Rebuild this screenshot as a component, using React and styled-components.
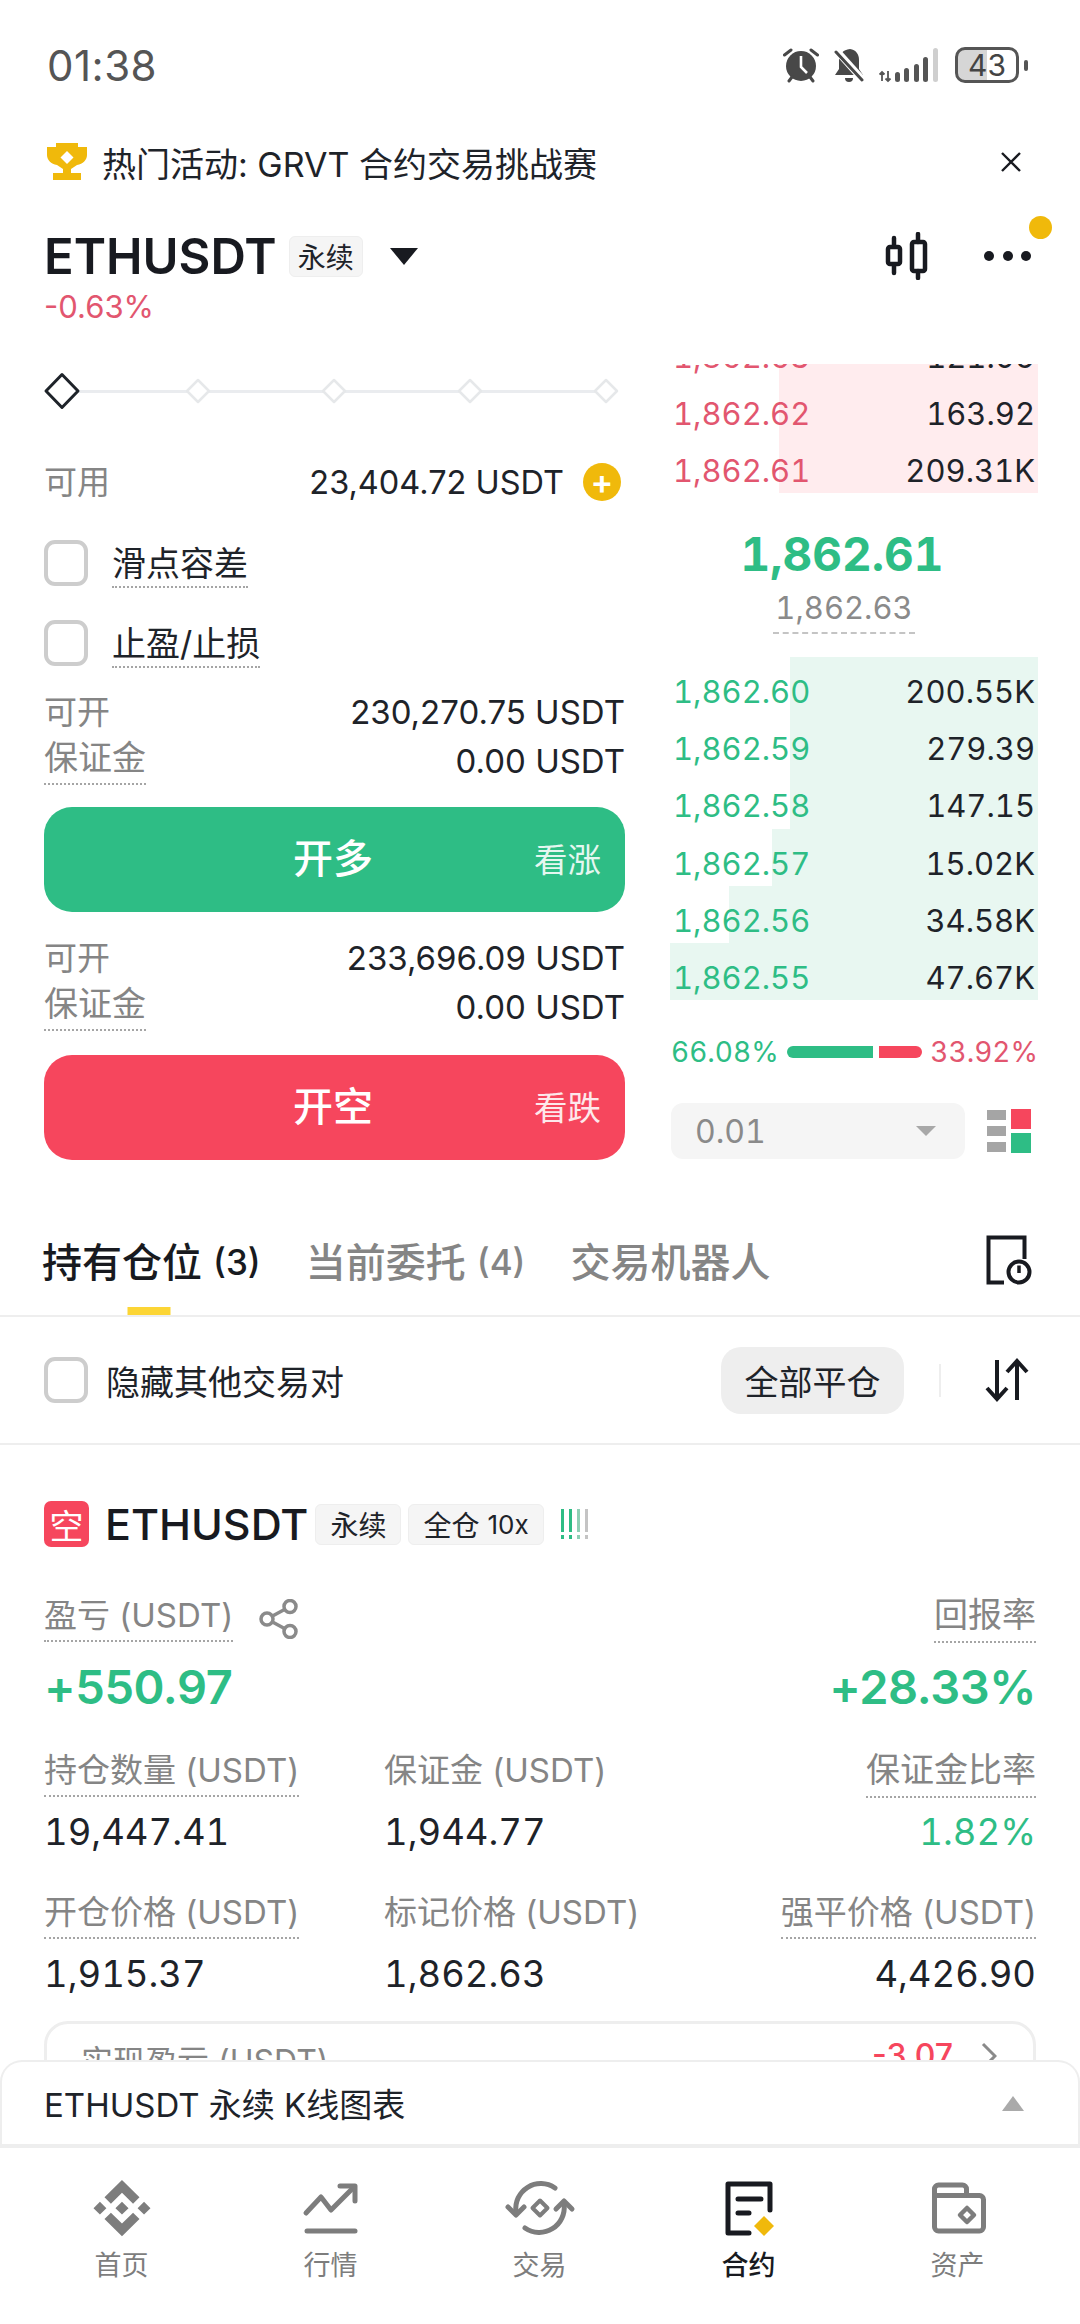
import React from 'react';
import styled, { createGlobalStyle } from 'styled-components';

const Global = createGlobalStyle`
  html, body { margin: 0; padding: 0; background: #fff; }
  * { box-sizing: border-box; }
  body { font-family: Inter, "Noto Sans CJK SC", sans-serif; color: #1e2329; }
`;

const GREEN = '#2ebd85';
const RED = '#f6465d';
const SOFTRED = '#e2566f';
const GRAY = '#858585';

const Page = styled.div`
  width: 1080px; height: 2324px; display: flex; flex-direction: column; overflow: hidden; background: #fff;
`;
const Main = styled.div`
  flex: 1; min-height: 0; overflow: hidden; display: flex; flex-direction: column;
`;
const StatusBar = styled.div`
  flex: none; height: 130px; padding: 0 52px 0 47px; display: flex; align-items: center; justify-content: space-between;
`;
const Clock = styled.span`
  font-size: 42px; color: #555; letter-spacing: 0.5px;
`;
const StatusIcons = styled.div`
  display: flex; align-items: center; gap: 15px;
`;
const Battery = styled.div`
  width: 64px; height: 36px; border: 3px solid #555; border-radius: 10px; display: flex; align-items: center; justify-content: center;
  font-size: 30px; font-weight: 400; color: #444; overflow: hidden; background: linear-gradient(90deg, #d6d6d6 0 50%, #fff 50%);
`;
const BatteryNub = styled.div`
  width: 4px; height: 11px; background: #555; border-radius: 2px; margin-left: -10px;
`;
const Banner = styled.div`
  flex: none; height: 64px; padding: 0 58px 0 47px; display: flex; align-items: center; gap: 15px; font-size: 34px; color: #1e2329;
`;
const BannerText = styled.span`
  flex: 1;
`;
const TitleRow = styled.div`
  flex: none; margin-top: 34px; height: 56px; padding: 0 49px 0 44px; display: flex; align-items: center; position: relative;
`;
const Symbol = styled.span`
  font-size: 49px; font-weight: 600; color: #181a20;
`;
const Tag = styled.span`
  display: inline-flex; align-items: center; justify-content: center; height: 41px; padding: 0 ${p => p.$pad}px;
  margin-left: ${p => p.$ml || 0}px; background: #f5f5f5; border-radius: 6px; border: 1px solid #eee; font-size: 28px; color: #1e2329; gap: 8px;
`;
const TagSmall = styled.span`
  font-size: 26px;
`;
const Caret = styled.span`
  margin-left: 27px; width: 0; height: 0; border-left: 14px solid transparent; border-right: 14px solid transparent; border-top: 17px solid #181a20;
`;
const Spacer = styled.div`
  flex: 1;
`;
const Dots = styled.div`
  margin-left: 54px; display: flex; gap: 8.5px; align-items: center;
`;
const Dot = styled.span`
  width: 10px; height: 10px; border-radius: 50%; background: #181a20;
`;
const Badge = styled.span`
  position: absolute; right: 28px; top: -12px; width: 23px; height: 23px; border-radius: 50%; background: #f0b90b;
`;
const Change = styled.div`
  flex: none; height: 44px; padding-left: 44px; display: flex; align-items: center; font-size: 31px; color: ${SOFTRED};
`;
const Trade = styled.div`
  flex: none; margin-top: 36px; padding: 0 42px 0 44px; display: grid; grid-template-columns: 581px 372px; column-gap: 41px; height: 795px;
`;
const Left = styled.div`
  display: flex; flex-direction: column;
`;
const SliderRow = styled.div`
  height: 54px; position: relative; display: flex; align-items: center; justify-content: space-between; padding: 0 6px 0 5px;
`;
const SliderTrack = styled.div`
  position: absolute; left: 20px; right: 18px; top: 26px; height: 3px; background: #eaecef;
`;
const BigDiamond = styled.svg`
  position: relative; margin: 0 -6px;
`;
const SmallDiamond = styled.svg`
  position: relative;
`;
const AvailRow = styled.div`
  margin-top: 32px; height: 64px; display: flex; align-items: center; justify-content: space-between; font-size: 32.5px; padding-right: 4px;
`;
const Muted = styled.span`
  color: ${GRAY}; font-size: ${p => p.$fs || 33}px; margin-bottom: ${p => p.$mb ?? 4}px;
`;
const AvailValue = styled.span`
  display: flex; align-items: center; gap: 19px; color: #1e2329;
`;
const Plus = styled.span`
  width: 38px; height: 38px; border-radius: 50%; background: #f0b90b; position: relative; display: flex; align-items: center; justify-content: center;
  color: #fff; font-size: 34px; font-weight: 600; line-height: 1;
`;
const CheckRow = styled.div`
  margin-top: ${p => p.$mt}px; height: 46px; display: flex; align-items: center; gap: 24px; font-size: 34px;
`;
const Check = styled.span`
  flex: none; width: 44px; height: 46px; border: 4px solid #cdcdcd; border-radius: 11px; background: #fff;
`;
const Dotted = styled.span`
  display: inline-block; line-height: 1.2; border-bottom: 2px dotted ${p => p.$plain ? 'transparent' : '#a5a5a5'}; padding-bottom: ${p => p.$pb ?? 2}px;
  color: ${p => p.$c || 'inherit'}; font-size: ${p => p.$fs ? `${p.$fs}px` : 'inherit'};
`;
const CheckLabel = styled(Dotted)`
  margin-top: 6px; color: #1e2329;
`;
const InfoRow = styled.div`
  margin-top: ${p => p.$mt || 0}px; height: ${p => p.$h || 48}px; display: flex; align-items: center; justify-content: space-between; font-size: 33px; color: #1e2329;
`;
const TradeButton = styled.div`
  margin-top: ${p => p.$mt}px; height: 105px; background: ${p => p.$bg}; border-radius: 28px; color: #fff; position: relative;
  display: flex; align-items: center; justify-content: center; font-size: 40px; font-weight: 500; padding: 0 3px 8px 0;
`;
const ButtonHint = styled.span`
  position: absolute; right: 24px; top: 48%; transform: translateY(-50%); font-size: 33.5px; font-weight: 400; opacity: .88;
`;
const Right = styled.div`
  display: flex; flex-direction: column; font-variant-numeric: tabular-nums;
`;
const Asks = styled.div`
  height: 129px; overflow: hidden; display: flex; flex-direction: column; justify-content: flex-end;
`;
const BookRow = styled.div`
  flex: none; height: 57.2px; position: relative; display: flex; align-items: center; justify-content: space-between; padding: 12px 3px 0 7px; font-size: 31px;
`;
const BookBar = styled.div`
  position: absolute; right: 0; top: 0; bottom: 0; background: ${p => p.$bg};
`;
const BookPrice = styled.span`
  position: relative; color: ${p => p.$c};
`;
const BookQty = styled.span`
  position: relative; color: #1e2329;
`;
const MidPrice = styled.div`
  margin-top: 35px; height: 52px; display: flex; align-items: center; justify-content: center; color: ${GREEN}; font-weight: 700; font-size: 46px; padding-right: 20px;
`;
const SubPriceWrap = styled.div`
  height: 74px; margin-top: 3px; display: flex; align-items: flex-start; justify-content: center; padding-right: 16px;
`;
const SubPrice = styled.span`
  font-size: 31px; color: #8a8a8a; border-bottom: 2px dashed #c4c4c4; padding: 7px 2px 6px; line-height: 36px; height: 51px;
`;
const Bids = styled.div`
  display: flex; flex-direction: column;
`;
const Ratio = styled.div`
  margin-top: 34px; height: 36px; display: flex; align-items: center; font-size: 28px; padding-left: 5px;
`;
const RatioBar = styled.div`
  display: flex; gap: 6px; margin: 0 8px; flex: 1;
`;
const RatioPart = styled.div`
  height: 12px; background: ${p => p.$bg}; flex: ${p => p.$f}; border-radius: ${p => p.$r};
`;
const SelectRow = styled.div`
  margin-top: 33px; display: flex; align-items: center; padding-left: 5px;
`;
const Select = styled.div`
  width: 294px; height: 56px; background: #f5f5f5; border-radius: 12px; display: flex; align-items: center; justify-content: space-between;
  padding: 0 29px 0 24px; font-size: 32px; color: #8a8a8a;
`;
const SelectCaret = styled.span`
  width: 0; height: 0; border-left: 10px solid transparent; border-right: 10px solid transparent; border-top: 10px solid #a8a8a8;
`;
const DepthIcon = styled.svg`
  margin-left: 22px;
`;
const Tabs = styled.div`
  flex: none; margin-top: 46px; height: 112px; padding: 0 48px 0 42px; display: flex; align-items: stretch; gap: 45px; border-bottom: 2px solid #eeeeee;
  font-size: 40px; font-weight: 500;
`;
const Tab = styled.div`
  position: relative; display: flex; align-items: center; color: ${p => p.$active ? '#181a20' : GRAY};
  &::after {
    content: ''; display: ${p => p.$active ? 'block' : 'none'}; position: absolute; left: 49%; bottom: 0; transform: translateX(-50%); width: 43px; height: 8px; background: #fcd535;
  }
`;
const TabCount = styled.span`
  margin-left: 11px; font-size: 35px; line-height: 1; margin-top: 4px;
`;
const TabIcon = styled.div`
  margin-left: auto; display: flex; align-items: center;
`;
const Tools = styled.div`
  flex: none; height: 128px; padding: 0 50px 0 44px; display: flex; align-items: center; border-bottom: 2px solid #eeeeee; font-size: 34px; gap: 18px;
`;
const CloseAll = styled.div`
  width: 183px; height: 67px; background: #eeeeee; border-radius: 20px; display: flex; align-items: center; justify-content: center; font-size: 34px; color: #1e2329;
`;
const Vline = styled.span`
  width: 2px; height: 33px; background: #eeeeee; margin: 0 25px 0 17px;
`;
const Position = styled.div`
  flex: none; padding: 56px 44px 0 44px; display: flex; flex-direction: column;
`;
const PosHead = styled.div`
  height: 46px; display: flex; align-items: center;
`;
const SideBadge = styled.span`
  width: 45px; height: 46px; border-radius: 7px; background: ${RED}; color: #fff; font-size: 34px; display: flex; align-items: center; justify-content: center; margin-right: 16px;
`;
const PosSymbol = styled.span`
  font-size: 43px; font-weight: 500; color: #181a20; margin-right: 7px;
`;
const Leverage = styled.svg`
  margin-left: 15px;
`;
const PnlLabels = styled.div`
  margin-top: 45px; height: 54px; display: flex; align-items: center; justify-content: space-between; font-size: 33px;
`;
const Inline = styled.div`
  display: flex; align-items: center; gap: 26px;
`;
const PnlValues = styled.div`
  margin-top: 10px; height: 60px; display: flex; align-items: center; justify-content: space-between; font-size: 47px; font-weight: 600; color: ${GREEN}; letter-spacing: -0.4px;
`;
const StatGrid = styled.div`
  margin-top: ${p => p.$mt}px; display: grid; grid-template-columns: 340px 1fr auto; font-size: 33px;
`;
const StatLabel = styled.div`
  height: 50px; display: flex; align-items: center; justify-content: ${p => p.$end ? 'flex-end' : 'flex-start'}; color: ${GRAY};
`;
const StatValue = styled.div`
  margin-top: 8px; height: 50px; display: flex; align-items: center; justify-content: ${p => p.$end ? 'flex-end' : 'flex-start'}; font-size: 36.5px; color: ${p => p.$c || '#1e2329'};
  font-variant-numeric: tabular-nums;
`;
const RealizedCard = styled.div`
  margin-top: 22px; border: 3px solid #eeeeee; border-radius: 24px; height: 120px; padding: 12px 36px 0 34px; display: flex; justify-content: space-between; align-items: flex-start; font-size: 32px;
`;
const RealizedValue = styled.span`
  display: flex; align-items: center; gap: 28px; color: ${RED}; font-weight: 500;
`;
const Sheet = styled.div`
  flex: none; height: 88px; border: 2px solid #eeeeee; border-bottom-width: 4px; border-radius: 22px 22px 0 0; display: flex; align-items: center; justify-content: space-between;
  padding: 0 54px 0 42px; font-size: 33px; color: #1e2329; background: #fff;
`;
const SheetCaret = styled.span`
  width: 0; height: 0; border-left: 11px solid transparent; border-right: 11px solid transparent; border-bottom: 15px solid #aaaaaa;
`;
const Nav = styled.nav`
  flex: none; height: 176px; padding: 30px 17px 0; display: grid; grid-template-columns: repeat(5, 209px);
`;
const NavItem = styled.div`
  display: flex; flex-direction: column; align-items: center; gap: 4px; font-size: 27px; color: ${p => p.$active ? '#181a20' : '#7d7d7d'}; font-weight: ${p => p.$active ? 500 : 400};
`;
const NavIcon = styled.svg`
  width: 72px; height: 62px; display: block;
`;
const Candle = styled.svg`
  display: block;
`;

const asks = ['1,862.63|121.05', '1,862.62|163.92', '1,862.61|209.31K'].map(s => s.split('|'));
const bids = [
  ['1,862.60', '200.55K', 248],
  ['1,862.59', '279.39', 248],
  ['1,862.58', '147.15', 248],
  ['1,862.57', '15.02K', 266],
  ['1,862.56', '34.58K', 309],
  ['1,862.55', '47.67K', 368],
];

const Diamond = () => (
  <SmallDiamond width="26" height="26" viewBox="0 0 26 26">
    <path d="M13 2 24 13 13 24 2 13Z" fill="#fff" stroke="#e6e8ea" strokeWidth="2.5" strokeLinejoin="round" />
  </SmallDiamond>
);

const Trophy = () => (
  <svg width="40" height="38" viewBox="0 0 40 38">
    <path d="M9 0h22v4h9v8c0 5-4 9-10 10l-6 4v4h10v7H6v-7h10v-4l-6-4C4 21 0 17 0 12V4h9Z" fill="#f0b90b" />
    <path d="M20 8l6.500 6.500L20 21l-6.500-6.500Z" fill="#fff" />
  </svg>
);

const barsAt = [[16, 10], [25, 14], [35, 18], [44, 25]];

export default function App() {
  return (
    <Page>
      <Global />
      <Main>
        <StatusBar>
          <Clock>01:38</Clock>
          <StatusIcons>
            <svg width="36" height="36" viewBox="0 0 36 36">
              <circle cx="18" cy="19" r="15" fill="#484848" />
              <path d="M18 9v11l6 6" stroke="#fff" strokeWidth="2.6" fill="none" />
              <path d="M1.500 8 8 3M34.500 8 28 3" stroke="#484848" strokeWidth="3" strokeLinecap="round" />
              <path d="M6 34l3-4M30 34l-3-4" stroke="#484848" strokeWidth="3" strokeLinecap="round" />
            </svg>
            <svg width="30" height="36" viewBox="0 0 30 36">
              <path d="M16 2c6 1 9 5 9 11v9l4 6H1l4-6v-9C5 7 9 3 16 2Z" fill="#484848" />
              <path d="M11 31h8a4 4 0 0 1-8 0Z" fill="#484848" />
              <path d="M2 3l26 29" stroke="#fff" strokeWidth="7" />
              <path d="M2 5l26 28" stroke="#484848" strokeWidth="3" strokeLinecap="round" />
            </svg>
            <svg width="61" height="36" viewBox="0 0 61 36">
              <path d="M3 34V25M0.500 27.500 3 25l2.500 2.500M9 24v10M6.500 31.500 9 34l2.500-2.500" stroke="#555" strokeWidth="1.800" fill="none" />
              {barsAt.map(([x, h]) => (
                <rect key={x} x={x} y={35 - h} width="5" height={h} rx="2.5" fill="#555" />
              ))}
              <rect x="54" y="1" width="5" height="34" rx="2.5" fill="#cfcfcf" />
            </svg>
            <Battery>43</Battery>
            <BatteryNub />
          </StatusIcons>
        </StatusBar>
        <Banner>
          <Trophy />
          <BannerText>热门活动: GRVT 合约交易挑战赛</BannerText>
          <svg width="22" height="22" viewBox="0 0 22 22">
            <path d="M2 2l18 18M20 2 2 20" stroke="#181a20" strokeWidth="2.4" />
          </svg>
        </Banner>
        <TitleRow>
          <Symbol>ETHUSDT</Symbol>
          <Tag $ml={12} $pad={8}>永续</Tag>
          <Caret />
          <Spacer />
          <Candle width="46" height="48" viewBox="0 0 46 48" fill="none" stroke="#181a20" strokeWidth="4.500" strokeLinecap="round" strokeLinejoin="round">
            <path d="M10 6v8M10 33v8M34 2v8M34 39v7" />
            <rect x="4" y="15" width="12" height="17" rx="2" />
            <rect x="28" y="10" width="13" height="29" rx="2" />
          </Candle>
          <Dots><Dot /><Dot /><Dot /></Dots>
          <Badge />
        </TitleRow>
        <Change>-0.63%</Change>
        <Trade>
          <Left>
            <SliderRow>
              <SliderTrack />
              <BigDiamond width="38" height="38" viewBox="0 0 38 38">
                <path d="M19 2.500 35 19 19 35.500 3 19Z" fill="#fff" stroke="#1e2329" strokeWidth="3" strokeLinejoin="round" />
              </BigDiamond>
              <Diamond /><Diamond /><Diamond /><Diamond />
            </SliderRow>
            <AvailRow>
              <Muted>可用</Muted>
              <AvailValue>23,404.72 USDT<Plus>+</Plus></AvailValue>
            </AvailRow>
            <CheckRow $mt={26}><Check /><CheckLabel>滑点容差</CheckLabel></CheckRow>
            <CheckRow $mt={34}><Check /><CheckLabel>止盈/止损</CheckLabel></CheckRow>
            <InfoRow $mt={21} $h={50}><Muted>可开</Muted><span>230,270.75 USDT</span></InfoRow>
            <InfoRow><Muted $fs={34} $mb={0}><Dotted $pb={4}>保证金</Dotted></Muted><span>0.00 USDT</span></InfoRow>
            <TradeButton $mt={22} $bg={GREEN}>开多<ButtonHint>看涨</ButtonHint></TradeButton>
            <InfoRow $mt={21} $h={50}><Muted>可开</Muted><span>233,696.09 USDT</span></InfoRow>
            <InfoRow><Muted $fs={34} $mb={0}><Dotted $pb={4}>保证金</Dotted></Muted><span>0.00 USDT</span></InfoRow>
            <TradeButton $mt={24} $bg={RED}>开空<ButtonHint>看跌</ButtonHint></TradeButton>
          </Left>
          <Right>
            <Asks>
              {asks.map(([p, q]) => (
                <BookRow key={p}>
                  <BookBar $bg="#ffecee" style={{ width: '259px' }} />
                  <BookPrice $c={SOFTRED}>{p}</BookPrice>
                  <BookQty>{q}</BookQty>
                </BookRow>
              ))}
            </Asks>
            <MidPrice>1,862.61</MidPrice>
            <SubPriceWrap><SubPrice>1,862.63</SubPrice></SubPriceWrap>
            <Bids>
              {bids.map(([p, q, w]) => (
                <BookRow key={p}>
                  <BookBar $bg="#e8f7f1" style={{ width: `${w}px` }} />
                  <BookPrice $c={GREEN}>{p}</BookPrice>
                  <BookQty>{q}</BookQty>
                </BookRow>
              ))}
            </Bids>
            <Ratio>
              <BookPrice $c={GREEN}>66.08%</BookPrice>
              <RatioBar>
                <RatioPart $bg={GREEN} $f={91} $r="6px 0 0 6px" />
                <RatioPart $bg={RED} $f={45} $r="0 6px 6px 0" />
              </RatioBar>
              <BookPrice $c={SOFTRED}>33.92%</BookPrice>
            </Ratio>
            <SelectRow>
              <Select>0.01<SelectCaret /></Select>
              <DepthIcon width="44" height="44" viewBox="0 0 44 44">
                <rect x="0" y="1" width="19" height="10" fill="#a5a5a5" />
                <rect x="0" y="17" width="19" height="10" fill="#a5a5a5" />
                <rect x="0" y="33" width="19" height="10" fill="#a5a5a5" />
                <rect x="24" y="0" width="20" height="20" fill={RED} />
                <rect x="24" y="24" width="20" height="20" fill={GREEN} />
              </DepthIcon>
            </SelectRow>
          </Right>
        </Trade>
        <Tabs>
          <Tab $active>持有仓位<TabCount>(3)</TabCount></Tab>
          <Tab>当前委托<TabCount>(4)</TabCount></Tab>
          <Tab>交易机器人</Tab>
          <TabIcon>
            <svg width="46" height="50" viewBox="0 0 46 50">
              <path d="M18 47.500H2.500v-45h36V24" fill="none" stroke="#181a20" strokeWidth="4" />
              <circle cx="33" cy="37" r="10.500" fill="#fff" stroke="#181a20" strokeWidth="4" />
              <path d="M33 30.500V38" stroke="#181a20" strokeWidth="3.500" />
            </svg>
          </TabIcon>
        </Tabs>
        <Tools>
          <Check />
          <span>隐藏其他交易对</span>
          <Spacer />
          <CloseAll>全部平仓</CloseAll>
          <Vline />
          <svg width="46" height="44" viewBox="0 0 46 44">
            <path d="M13 2v38M3 30l10 11 10-11" fill="none" stroke="#181a20" strokeWidth="4" />
            <path d="M33 42V4M23 14 33 3l10 11" fill="none" stroke="#181a20" strokeWidth="4" />
          </svg>
        </Tools>
        <Position>
          <PosHead>
            <SideBadge>空</SideBadge>
            <PosSymbol>ETHUSDT</PosSymbol>
            <Tag $pad={14}>永续</Tag>
            <Tag $ml={7} $pad={14}>全仓 <TagSmall>10x</TagSmall></Tag>
            <Leverage width="32" height="32" viewBox="0 0 32 32">
              {[2, 10, 18, 26].map((x, i) => (
                <g key={x}>
                  <rect x={x} y="1" width="3" height="23" fill={i < 2 ? GREEN : i === 2 ? '#8fcfb5' : '#c4c4c4'} />
                  <rect x={x} y="27" width="3" height="4" fill={i < 2 ? GREEN : i === 2 ? '#8fcfb5' : '#c4c4c4'} />
                </g>
              ))}
            </Leverage>
          </PosHead>
          <PnlLabels>
            <Inline>
              <Dotted $c={GRAY} $pb={5}>盈亏 (USDT)</Dotted>
              <svg width="40" height="40" viewBox="0 0 40 40" fill="none" stroke="#8a8a8a" strokeWidth="3.500">
                <circle cx="8" cy="20" r="6" /><circle cx="31" cy="7.500" r="6" /><circle cx="31" cy="32.500" r="6" />
                <path d="M13.500 17 25.500 10.500M13.500 23 25.500 29.500" />
              </svg>
            </Inline>
            <Dotted $c={GRAY} $pb={5} $fs={34}>回报率</Dotted>
          </PnlLabels>
          <PnlValues><span>+550.97</span><span>+28.33%</span></PnlValues>
          <StatGrid $mt={33}>
            <StatLabel><Dotted $pb={5}>持仓数量 (USDT)</Dotted></StatLabel>
            <StatLabel><Dotted $pb={5} $plain>保证金 (USDT)</Dotted></StatLabel>
            <StatLabel $end><Dotted $pb={5} $fs={34}>保证金比率</Dotted></StatLabel>
            <StatValue>19,447.41</StatValue>
            <StatValue>1,944.77</StatValue>
            <StatValue $end $c={GREEN}>1.82%</StatValue>
          </StatGrid>
          <StatGrid $mt={34}>
            <StatLabel><Dotted $pb={5}>开仓价格 (USDT)</Dotted></StatLabel>
            <StatLabel><Dotted $pb={5} $plain>标记价格 (USDT)</Dotted></StatLabel>
            <StatLabel $end><Dotted $pb={5}>强平价格 (USDT)</Dotted></StatLabel>
            <StatValue>1,915.37</StatValue>
            <StatValue>1,862.63</StatValue>
            <StatValue $end>4,426.90</StatValue>
          </StatGrid>
          <RealizedCard>
            <Muted $fs={32}>实现盈亏 (USDT)</Muted>
            <RealizedValue>-3.07
              <svg width="16" height="28" viewBox="0 0 16 28"><path d="M2 2l12 12L2 26" fill="none" stroke="#8a8a8a" strokeWidth="3" /></svg>
            </RealizedValue>
          </RealizedCard>
        </Position>
      </Main>
      <Sheet>
        <span>ETHUSDT 永续 K线图表</span>
        <SheetCaret />
      </Sheet>
      <Nav>
        <NavItem>
          <NavIcon viewBox="0 0 72 62" fill="#7d7d7d">
            <g transform="translate(7.500 2) scale(.45 .445)">
              <path d="M38.730 53.200 63.300 28.630 87.890 53.220 102.200 38.920 63.300 0 24.420 38.900zM0 63.310l14.300-14.300 14.310 14.300-14.310 14.300zM38.730 73.410 63.300 97.980l24.590-24.580 14.310 14.290-.01.01L63.300 126.600 24.420 87.700l-.02-.02zM98 63.310l14.300-14.300 14.300 14.300-14.300 14.300zM77.830 63.300 63.300 48.760 52.560 59.500l-1.240 1.240-2.540 2.540 14.520 14.500 14.530-14.520z" />
            </g>
          </NavIcon>
          首页
        </NavItem>
        <NavItem>
          <NavIcon viewBox="0 0 72 62" fill="none" stroke="#7d7d7d" strokeWidth="5" strokeLinecap="round" strokeLinejoin="round">
            <path d="M11 35 26 19l10 13 23-23" />
            <path d="M45 8h15v15" />
            <path d="M12 53h48" />
          </NavIcon>
          行情
        </NavItem>
        <NavItem>
          <NavIcon viewBox="0 0 72 62" fill="none" stroke="#7d7d7d" strokeWidth="5" strokeLinecap="round" strokeLinejoin="round">
            <path d="M12 34A25 25 0 0 1 51 10" />
            <path d="M60 26A25 25 0 0 1 21 50" />
            <path d="M4 29l8 8 8-8" />
            <path d="M52 31l8-8 8 8" />
            <path d="M36 22.500 43.500 30 36 37.500 28.500 30Z" strokeWidth="4" />
          </NavIcon>
          交易
        </NavItem>
        <NavItem $active>
          <NavIcon viewBox="0 0 72 62" fill="none" stroke="#181a20" strokeWidth="5" strokeLinecap="round" strokeLinejoin="round">
            <path d="M36 55H15V6h42v26" />
            <path d="M25 21h23M25 35h11" />
            <path d="M51 38l10 10-10 10-10-10Z" fill="#f0b90b" stroke="none" />
          </NavIcon>
          合约
        </NavItem>
        <NavItem>
          <NavIcon viewBox="0 0 72 62" fill="none" stroke="#7d7d7d" strokeWidth="5" strokeLinejoin="round">
            <path d="M12.500 11a4 4 0 0 1 4-4h24a4 4 0 0 1 4 4v6.500h13a4 4 0 0 1 4 4V49a4 4 0 0 1-4 4h-41a4 4 0 0 1-4-4Z" />
            <path d="M12.500 17.500h32" />
            <path d="M45 30l7 7-7 7-7-7Z" strokeWidth="4.500" />
          </NavIcon>
          资产
        </NavItem>
      </Nav>
    </Page>
  );
}
